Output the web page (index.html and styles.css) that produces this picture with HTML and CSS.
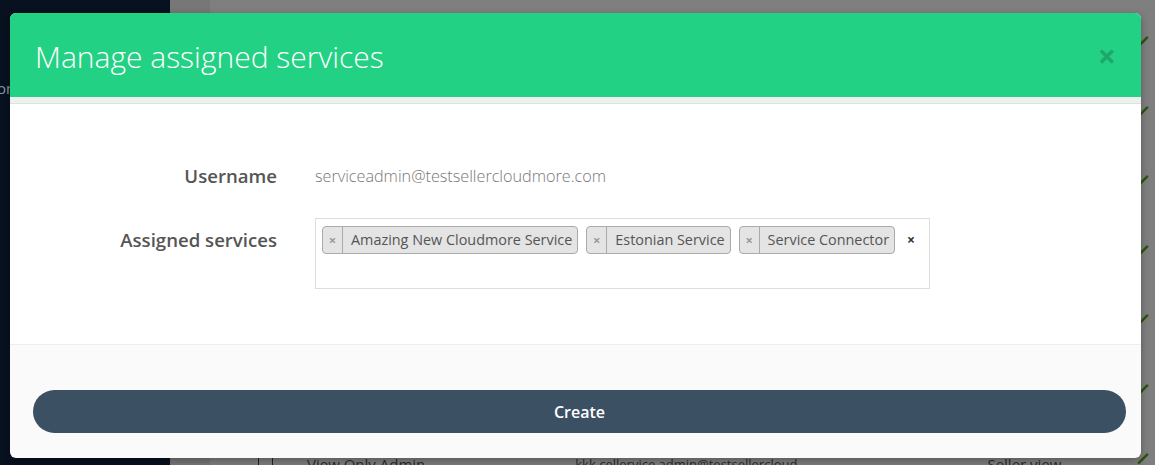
FILE: index.html
```html
<!DOCTYPE html>
<html lang="en">
<head>
    <meta charset="UTF-8">
    <title>Manage assigned services</title>
    <link rel="stylesheet" href="styles.css">
</head>
<body>
    <div class="page">
        <div class="sidebar"><span class="side-item">on</span></div>
        <div class="content">
            <div class="content-edge"></div>
            <div class="content-main">
                <div class="bg-row">
                    <span class="bg-check"></span>
                    <span class="bg-text">View Only Admin</span>
                    <span class="bg-text bg-mail">kkk.cellervice.admin@testsellercloud</span>
                    <span class="bg-text bg-view">Seller view</span>
                </div>
            </div>
            <div class="check-col">
                <svg class="tick" viewBox="0 0 12 12"><path d="M1 11 L11 1"/></svg>
                <svg class="tick" viewBox="0 0 12 12"><path d="M1 11 L11 1"/></svg>
                <svg class="tick" viewBox="0 0 12 12"><path d="M1 11 L11 1"/></svg>
                <svg class="tick" viewBox="0 0 12 12"><path d="M1 11 L11 1"/></svg>
                <svg class="tick" viewBox="0 0 12 12"><path d="M1 11 L11 1"/></svg>
                <svg class="tick" viewBox="0 0 12 12"><path d="M1 11 L11 1"/></svg>
                <svg class="tick" viewBox="0 0 12 12"><path d="M1 11 L11 1"/></svg>
            </div>
        </div>
    </div>

    <div class="backdrop"></div>

    <div class="modal">
        <div class="modal-header">
            <h2 class="modal-title">Manage assigned services</h2>
            <span class="modal-close">&times;</span>
        </div>
        <div class="modal-strip"></div>
        <div class="modal-body">
            <div class="form-row">
                <label class="form-label">Username</label>
                <div class="form-value">serviceadmin@testsellercloudmore.com</div>
            </div>
            <div class="form-row">
                <label class="form-label">Assigned services</label>
                <div class="select-box">
                    <span class="tag"><span class="tag-x">&times;</span><span class="tag-name">Amazing New Cloudmore Service</span></span>
                    <span class="tag"><span class="tag-x">&times;</span><span class="tag-name">Estonian Service</span></span>
                    <span class="tag"><span class="tag-x">&times;</span><span class="tag-name">Service Connector</span></span>
                    <span class="clear-all">&times;</span>
                </div>
            </div>
        </div>
        <div class="modal-footer">
            <button type="button" class="btn-create">Create</button>
        </div>
    </div>
</body>
</html>
```

FILE: styles.css
```css
html, body {
    margin: 0;
    padding: 0;
    height: 100%;
    overflow: hidden;
    font-family: "Open Sans", Arial, sans-serif;
}
.page {
    display: flex;
    height: 465px;
}
.sidebar {
    width: 170px;
    background: #07111f;
    padding-top: 78px;
    box-sizing: border-box;
}
.side-item {
    display: block;
    margin-left: -3px;
    color: #8d95a0;
    font-size: 15px;
}
.content {
    flex: 1;
    background: #fff;
    display: flex;
}
.content-edge {
    width: 40px;
    background: #eee;
}
.content-main {
    flex: 1;
    display: flex;
    flex-direction: column;
    justify-content: flex-end;
}
.check-col {
    width: 12px;
    padding: 36px 6px 0 0;
    display: flex;
    flex-direction: column;
    gap: 58px;
}
.tick {
    width: 12px;
    height: 12px;
    fill: none;
    stroke: #52a81c;
    stroke-width: 2.5;
}
.bg-row {
    display: flex;
    align-items: center;
    height: 14px;
    padding-left: 48px;
    color: #555;
    font-size: 15px;
    line-height: 14px;
    overflow: hidden;
}
.bg-check {
    width: 13px;
    height: 13px;
    border: 1px solid #444;
    border-radius: 3px;
    margin-top: 8px;
}
.bg-text {
    margin-left: 34px;
    margin-top: 12px;
    white-space: nowrap;
}
.bg-mail {
    margin-left: 150px;
    font-size: 13px;
}
.bg-view {
    margin-left: 190px;
}
.backdrop {
    position: absolute;
    left: 170px;
    top: 0;
    right: 0;
    bottom: 0;
    background: rgba(0, 0, 0, 0.5);
}
.modal {
    position: absolute;
    left: 10px;
    top: 13px;
    width: 1131px;
    height: 445px;
    background: #fafafa;
    border-radius: 6px;
    overflow: hidden;
    box-shadow: 0 3px 9px rgba(0, 0, 0, 0.3);
    display: flex;
    flex-direction: column;
}
.modal-header {
    background: #22d183;
    height: 84px;
    display: flex;
    align-items: center;
    justify-content: space-between;
    padding: 0 25px 0 25px;
}
.modal-title {
    margin: 0;
    color: #fff;
    font-size: 30px;
    font-weight: 300;
    padding-top: 2px;
}
.modal-close {
    color: #1ca86b;
    font-size: 32px;
    font-weight: 700;
    line-height: 1;
    padding-top: 1px;
}
.modal-strip {
    height: 6px;
    background: #efefef;
    border-bottom: 1px solid #cfe9df;
}
.modal-body {
    background: #fff;
    height: 241px;
    border-bottom: 1px solid #eee;
    padding-top: 59px;
    box-sizing: border-box;
}
.form-row {
    display: flex;
    align-items: flex-start;
    margin-bottom: 29px;
}
.form-label {
    width: 267px;
    text-align: right;
    font-size: 18.6px;
    font-weight: 600;
    color: #555;
    padding-right: 38px;
    line-height: 26px;
}
.form-row + .form-row .form-label {
    padding-top: 9px;
}
.form-value {
    font-size: 16.2px;
    color: #777;
    font-weight: 300;
    line-height: 26px;
}
.select-box {
    width: 615px;
    height: 71px;
    box-sizing: border-box;
    border: 1px solid #ddd;
    padding: 7px 6px 0 6px;
    display: flex;
    align-items: flex-start;
    gap: 8px;
    background: #fff;
}
.tag {
    display: flex;
    flex-shrink: 0;
    align-items: stretch;
    height: 28px;
    box-sizing: border-box;
    background: #e4e4e4;
    border: 1px solid #aaa;
    border-radius: 4px;
    color: #555;
    font-size: 14.4px;
    line-height: 26px;
    white-space: nowrap;
}
.tag-x {
    width: 19px;
    text-align: center;
    border-right: 1px solid #aaa;
    color: #999;
    font-size: 13px;
    font-weight: 700;
}
.tag-name {
    padding: 0 5px 0 8px;
}
.clear-all {
    color: #333;
    font-size: 14px;
    font-weight: 700;
    line-height: 28px;
    margin-left: 4px;
}
.modal-footer {
    flex: 1;
    padding: 45px 15px 0 23px;
}
.btn-create {
    display: block;
    width: 100%;
    height: 43px;
    border: none;
    border-radius: 22px;
    background: #3c5064;
    color: #fff;
    font-family: "Open Sans", Arial, sans-serif;
    font-size: 16px;
    font-weight: 600;
}
```
